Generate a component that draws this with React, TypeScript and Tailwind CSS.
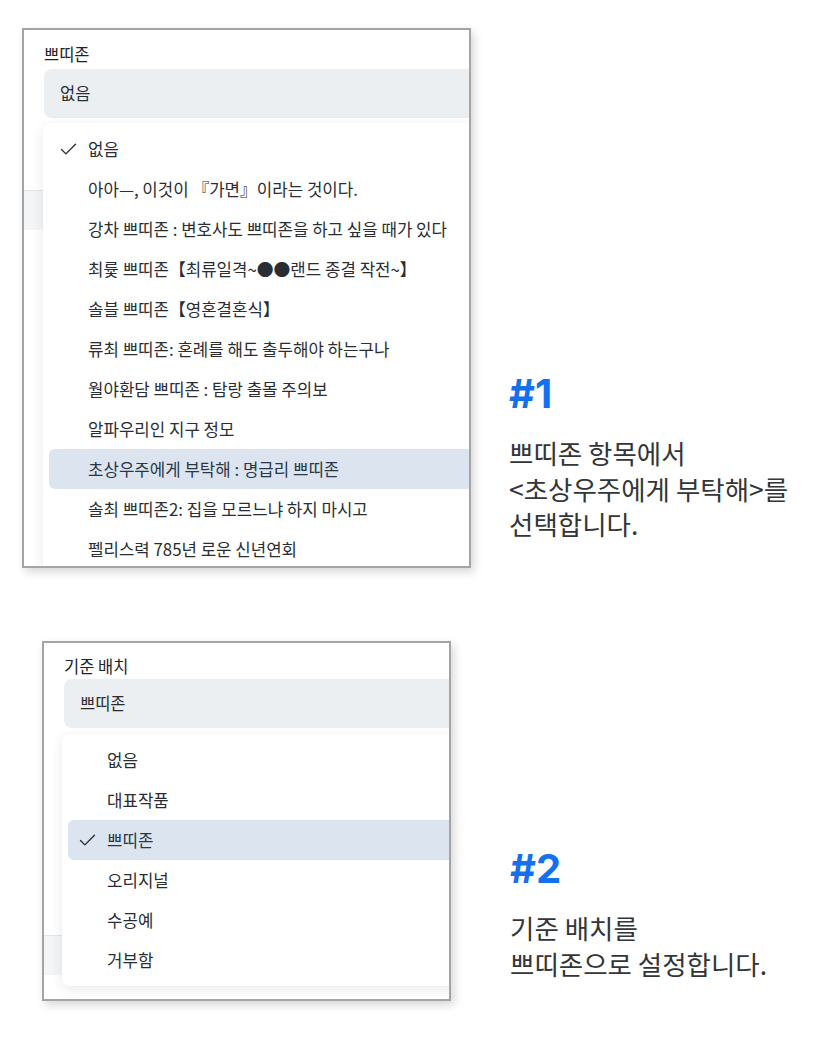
import { Check } from "lucide-react";

const ZONE_OPTIONS = [
  "없음",
  "아아—, 이것이 『가면』이라는 것이다.",
  "강차 쁘띠존 : 변호사도 쁘띠존을 하고 싶을 때가 있다",
  "최륯 쁘띠존【최류일격~●●랜드 종결 작전~】",
  "솔블 쁘띠존【영혼결혼식】",
  "류최 쁘띠존: 혼례를 해도 출두해야 하는구나",
  "월야환담 쁘띠존 : 탐랑 출몰 주의보",
  "알파우리인 지구 정모",
  "초상우주에게 부탁해 : 명급리 쁘띠존",
  "솔최 쁘띠존2: 집을 모르느냐 하지 마시고",
  "펠리스력 785년 로운 신년연회",
];

const PLACEMENT_OPTIONS = ["없음", "대표작품", "쁘띠존", "오리지널", "수공예", "거부함"];

function OptionRow({
  label,
  checked,
  active,
}: {
  label: string;
  checked: boolean;
  active: boolean;
}) {
  return (
    <div
      className={
        "flex h-[40px] items-center rounded-md whitespace-nowrap " +
        (active ? "bg-[#dce5ef] text-[#2a3746]" : "text-[#2a2e34]")
      }
    >
      <span className="flex w-[39px] shrink-0 justify-center">
        {checked ? <Check size={21} strokeWidth={1.6} className="text-[#2a2e34]" /> : null}
      </span>
      <span className="text-[16.8px] leading-[20px]">{label}</span>
    </div>
  );
}

function SelectShot({
  label,
  value,
  options,
  checkedIndex,
  activeIndex,
  frameClass,
  labelClass,
  bandClass,
  menuClass,
}: {
  label: string;
  value: string;
  options: string[];
  checkedIndex: number;
  activeIndex: number;
  frameClass: string;
  labelClass: string;
  bandClass: string;
  menuClass: string;
}) {
  return (
    <div
      className={
        "relative shrink-0 overflow-hidden border-2 border-[#a4a4a4] bg-white shadow-[3px_4px_9px_rgba(0,0,0,0.16)] " +
        frameClass
      }
    >
      <div className="pl-[20px]">
        <div className={"text-[16.5px] leading-[20px] text-[#1f2328] " + labelClass}>{label}</div>
        <div className="flex h-[49px] w-[520px] items-center rounded-lg bg-[#eceff2] pl-[16px] text-[16.5px] text-[#2a2e34]">
          {value}
        </div>
      </div>
      {/* page content sitting under the open list */}
      <div className={"h-[40px] border-t border-[#e1e4e8] bg-[#f4f5f7] " + bandClass} />
      <div
        className={
          "absolute w-[560px] rounded-l-lg bg-white p-[6px] shadow-[0_3px_12px_rgba(30,40,60,0.10)] " +
          menuClass
        }
      >
        {options.map((o, i) => (
          <OptionRow key={o} label={o} checked={i === checkedIndex} active={i === activeIndex} />
        ))}
      </div>
    </div>
  );
}

function Caption({ num, lines, className }: { num: string; lines: string[]; className: string }) {
  return (
    <div className={className}>
      <div className="font-['Inter',sans-serif] text-[40px] leading-[40px] font-bold text-[#1570f0]">
        {num}
      </div>
      <div className="mt-[21px] text-[26.5px] leading-[35.5px] text-[#333638]">
        {lines.map((l) => (
          <div key={l}>{l}</div>
        ))}
      </div>
    </div>
  );
}

export default function App() {
  return (
    <div className="h-[1040px] w-[820px] bg-white font-['Noto_Sans_CJK_KR','Noto_Sans',sans-serif]">
      <div className="flex items-start pt-[28px] pl-[22px]">
        <SelectShot
          label="쁘띠존"
          value="없음"
          options={ZONE_OPTIONS}
          checkedIndex={0}
          activeIndex={8}
          frameClass="h-[540px] w-[449px]"
          labelClass="pt-[14px] pb-[5px]"
          bandClass="mt-[72px]"
          menuClass="top-[93px] left-[19px] rounded-bl-none"
        />
        <Caption
          num="#1"
          lines={["쁘띠존 항목에서", "<초상우주에게 부탁해>를", "선택합니다."]}
          className="mt-[346px] ml-[38px]"
        />
      </div>
      <div className="mt-[73px] flex items-start pl-[42px]">
        <SelectShot
          label="기준 배치"
          value="쁘띠존"
          options={PLACEMENT_OPTIONS}
          checkedIndex={2}
          activeIndex={2}
          frameClass="h-[360px] w-[409px]"
          labelClass="pt-[13px] pb-[3px]"
          bandClass="mt-[207px]"
          menuClass="top-[91px] left-[18px]"
        />
        <Caption
          num="#2"
          lines={["기준 배치를", "쁘띠존으로 설정합니다."]}
          className="mt-[208px] ml-[59px]"
        />
      </div>
    </div>
  );
}
